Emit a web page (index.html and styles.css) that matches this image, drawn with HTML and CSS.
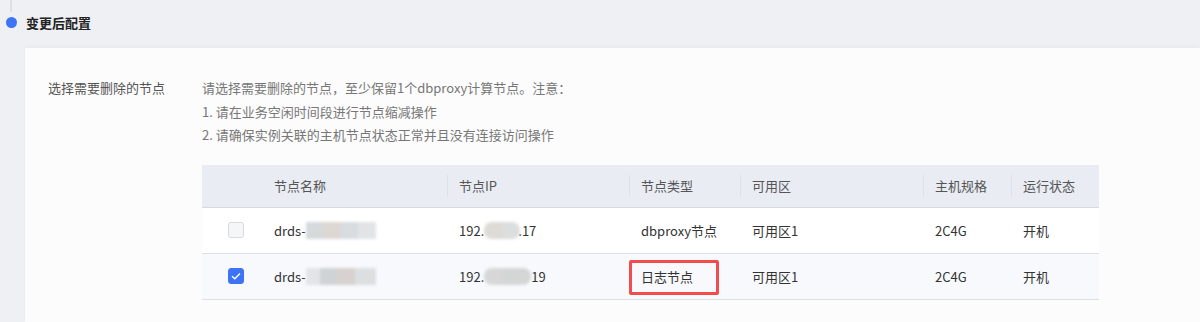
FILE: index.html
```html
<!DOCTYPE html>
<html lang="zh-CN">
<head>
    <meta charset="UTF-8">
    <meta name="viewport" content="width=device-width, initial-scale=1.0">
    <title>变更后配置</title>
    <link rel="stylesheet" href="styles.css">
</head>
<body>
    <div class="step">
        <div class="step-line"></div>
        <div class="step-head">
            <span class="step-dot"></span>
            <h2>变更后配置</h2>
        </div>
    </div>

    <div class="card">
        <div class="form-row">
            <div class="form-label">选择需要删除的节点</div>
            <div class="form-body">
                <div class="tips">
                    <p>请选择需要删除的节点，至少保留1个dbproxy计算节点。注意：</p>
                    <p>1. 请在业务空闲时间段进行节点缩减操作</p>
                    <p>2. 请确保实例关联的主机节点状态正常并且没有连接访问操作</p>
                </div>

                <div class="table">
                    <div class="tr th">
                        <div class="td"></div>
                        <div class="td">节点名称</div>
                        <div class="td sep">节点IP</div>
                        <div class="td sep">节点类型</div>
                        <div class="td sep">可用区</div>
                        <div class="td sep">主机规格</div>
                        <div class="td sep">运行状态</div>
                    </div>
                    <div class="tr">
                        <div class="td check-cell"><span class="checkbox disabled"></span></div>
                        <div class="td">drds-<span class="mask mask-name"></span></div>
                        <div class="td">192.<span class="mask mask-ip"></span>.17</div>
                        <div class="td">dbproxy节点</div>
                        <div class="td">可用区1</div>
                        <div class="td">2C4G</div>
                        <div class="td">开机</div>
                    </div>
                    <div class="tr selected">
                        <div class="td check-cell">
                            <span class="checkbox checked">
                                <svg width="10" height="8" viewBox="0 0 10 8"><path d="M1 4.2 L3.8 6.8 L9 1.4" fill="none" stroke="#fff" stroke-width="1.4"/></svg>
                            </span>
                        </div>
                        <div class="td">drds-<span class="mask mask-name2"></span></div>
                        <div class="td">192.<span class="mask mask-ip2"></span>19</div>
                        <div class="td highlight">日志节点<span class="red-box"></span></div>
                        <div class="td">可用区1</div>
                        <div class="td">2C4G</div>
                        <div class="td">开机</div>
                    </div>
                </div>
            </div>
        </div>
    </div>
</body>
</html>
```

FILE: styles.css
```css
* {
    margin: 0;
    padding: 0;
    box-sizing: border-box;
}

body {
    font-family: "Noto Sans CJK SC", "Noto Sans", sans-serif;
    background: #eef0f4;
    color: #333;
    font-size: 13px;
    overflow: hidden;
}

.step {
    padding-left: 6px;
    height: 48px;
}

.step-line {
    width: 2px;
    height: 12px;
    margin-left: 4px;
    background: #dcdfe5;
}

.step-head {
    display: flex;
    align-items: center;
    gap: 9px;
    height: 20px;
}

.step-dot {
    width: 11px;
    height: 11px;
    border-radius: 50%;
    background: #3d73f5;
}

.step-head h2 {
    font-size: 13px;
    font-weight: 700;
    color: #222;
}

.card {
    margin-left: 25px;
    background: #fcfcfc;
    box-shadow: 0 -2px 4px rgba(0,0,0,0.03);
    height: 274px;
    padding: 28px 0 0 23px;
}

.form-row {
    display: flex;
}

.form-label {
    width: 154px;
    color: #555;
    line-height: 23.5px;
}

.tips {
    color: #777;
    line-height: 23.5px;
    margin-bottom: 18px;
}

.table {
    width: 897px;
}

.tr {
    display: grid;
    grid-template-columns: 60px 185px 182px 111px 183px 88px 88px;
    height: 46px;
    align-items: center;
    background: #fff;
    border-bottom: 1px solid #dcdfe4;
}

.tr.th {
    height: 43px;
    background: #e9ecf3;
    color: #555;
    border-bottom: 1px solid #d6d9e0;
}

.tr.selected {
    background: #f8f9fc;
}

.td {
    padding-left: 12px;
    position: relative;
    white-space: nowrap;
    height: 100%;
    display: flex;
    align-items: center;
}

.td.sep::before {
    content: "";
    position: absolute;
    left: 0;
    top: 10px;
    width: 1px;
    height: 21px;
    background: #dde0e7;
}

.check-cell {
    padding-left: 26px;
}

.checkbox {
    width: 16px;
    height: 16px;
    border-radius: 3px;
    border: 1px solid #d9dbe0;
    background: #f5f6f8;
    display: flex;
    align-items: center;
    justify-content: center;
}

.checkbox.checked {
    background: #3d73f5;
    border-color: #3d73f5;
}

.mask {
    display: inline-block;
    height: 17px;
    filter: blur(1.5px);
}

.mask-name {
    width: 70px;
    background: linear-gradient(90deg, #d5d9dc 0 25%, #ddd7d3 25% 50%, #d8dcdf 50% 75%, #e1e3e4 75%);
}

.mask-name2 {
    width: 70px;
    background: linear-gradient(90deg, #e3e4e6 0 20%, #cfd3d6 20% 45%, #d7d2cf 45% 70%, #dcdee0 70%);
}

.mask-ip {
    width: 36px;
    margin-right: -2px;
    background: linear-gradient(90deg, #dedbd6 0 50%, #dcdddd 50%);
    border-radius: 8px;
}

.mask-ip2 {
    width: 47px;
    background: linear-gradient(90deg, #d6d7d6 0 40%, #d4d6d6 40%);
    border-radius: 8px;
}

.red-box {
    position: absolute;
    left: 0;
    top: 6px;
    width: 90px;
    height: 35px;
    border: 3px solid #f24c4c;
    border-radius: 2px;
}
```
